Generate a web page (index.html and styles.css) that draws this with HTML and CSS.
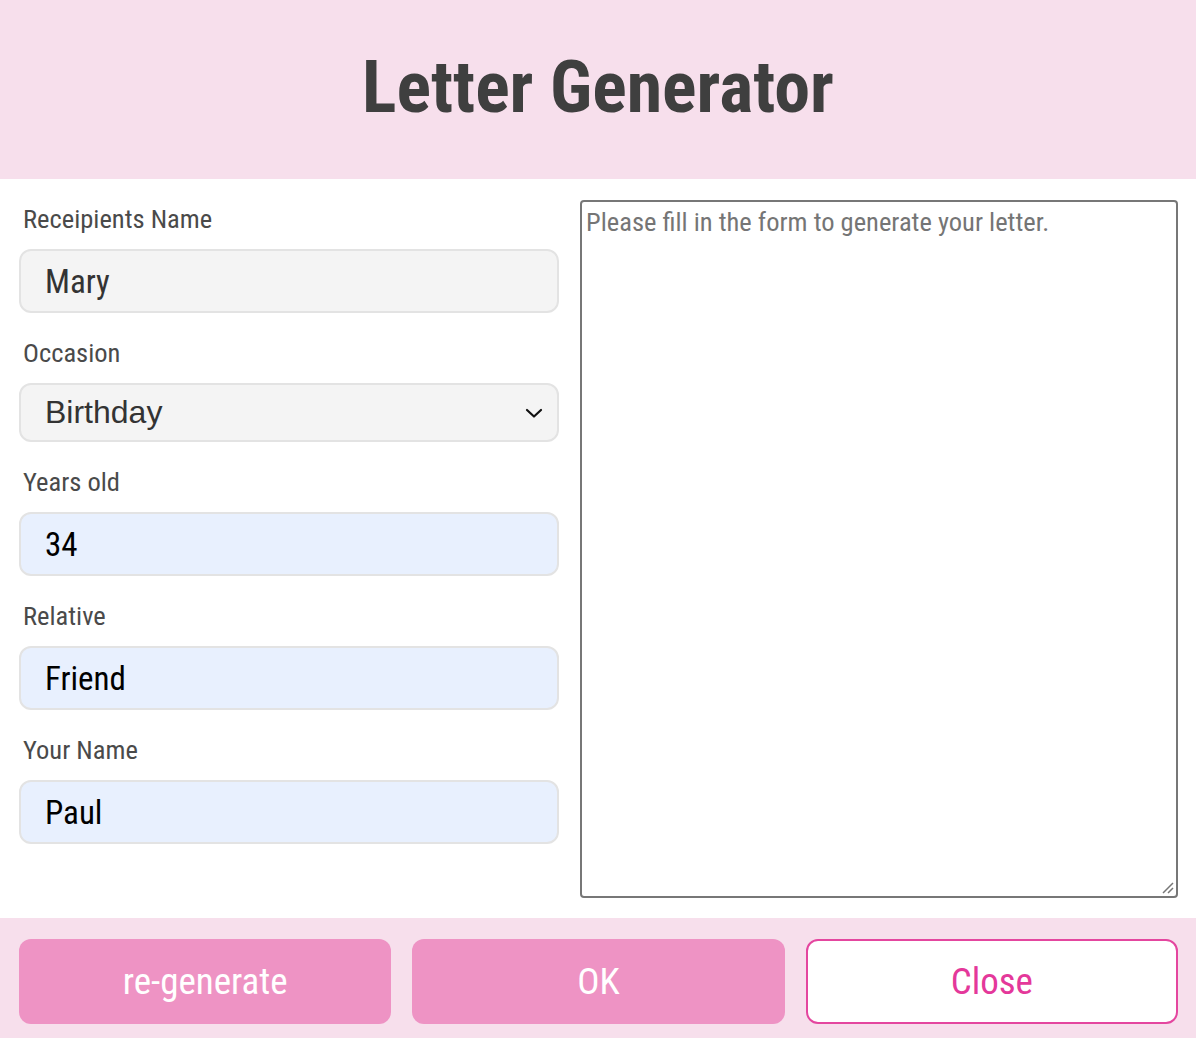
FILE: index.html
```html
<!DOCTYPE html>
<html lang="en">
<head>
<meta charset="utf-8">
<title>Letter Generator</title>
<link rel="stylesheet" href="styles.css">
</head>
<body>
<div class="app">
  <header class="header">
    <h1 class="title">Letter Generator</h1>
  </header>
  <main class="content">
    <form class="form">
      <div class="field">
        <label class="label">Receipients Name</label>
        <div class="input input-grey">Mary</div>
      </div>
      <div class="field">
        <label class="label">Occasion</label>
        <div class="input input-grey select">
          <span class="select-text">Birthday</span>
          <svg class="chevron" width="18" height="12" viewBox="0 0 18 12"><path d="M2 3 L9 9.5 L16 3" fill="none" stroke="#111" stroke-width="2.2" stroke-linecap="round" stroke-linejoin="round"/></svg>
        </div>
      </div>
      <div class="field">
        <label class="label">Years old</label>
        <div class="input input-blue">34</div>
      </div>
      <div class="field">
        <label class="label">Relative</label>
        <div class="input input-blue">Friend</div>
      </div>
      <div class="field">
        <label class="label">Your Name</label>
        <div class="input input-blue">Paul</div>
      </div>
    </form>
    <div class="letter">
      <div class="placeholder">Please fill in the form to generate your letter.</div>
      <svg class="grip" width="14" height="14" viewBox="0 0 14 14"><path d="M3 13 L13 3 M8 13 L13 8" stroke="#777" stroke-width="1.5" fill="none"/></svg>
    </div>
  </main>
  <footer class="footer">
    <button class="btn btn-fill">re-generate</button>
    <button class="btn btn-fill">OK</button>
    <button class="btn btn-outline">Close</button>
  </footer>
</div>
</body>
</html>
```
FILE: styles.css
```css
* { box-sizing: border-box; }
html, body { margin: 0; padding: 0; background: #fff; }
body {
  font-family: "Roboto Condensed", "Roboto", "Liberation Sans", sans-serif;
  font-stretch: condensed;
  width: 1196px;
  height: 1038px;
  overflow: hidden;
}
.app { display: flex; flex-direction: column; height: 1038px; }
.header {
  background: #f7dfec;
  height: 179px;
  display: flex;
  align-items: center;
  justify-content: center;
  padding-bottom: 4px;
}
.title {
  margin: 0;
  font-size: 72px;
  font-weight: 700;
  color: #3f3f3f;
}
.content {
  display: flex;
  padding: 21px 18px 20px 19px;
  gap: 21px;
  height: 739px;
}
.form {
  width: 540px;
  display: flex;
  flex-direction: column;
}
.field { display: flex; flex-direction: column; }
.label {
  font-size: 26.5px;
  color: #4a4a4a;
  padding-left: 4px;
  height: 30px;
  line-height: 30px;
  margin-top: 4px;
  margin-bottom: 15px;
}
.field + .field .label { margin-top: 25px; }
.input {
  height: 64px;
  border: 2px solid #e3e3e3;
  border-radius: 12px;
  padding: 0 24px;
  display: flex;
  align-items: center;
  font-size: 33px;
}
.input-grey { background: #f4f4f4; color: #333; }
.input-blue { background: #e8f0fe; color: #000; }
.select {
  height: 59px;
  justify-content: space-between;
  padding-right: 14px;
}
.select-text {
  font-family: "Liberation Sans", Arial, sans-serif;
  font-stretch: normal;
  font-size: 32px;
  color: #333;
}
.chevron { display: block; }
.letter {
  position: relative;
  flex: 1;
  border: 2px solid #777;
  border-radius: 4px;
  padding: 3px 4px;
}
.placeholder {
  font-size: 26.5px;
  color: #757575;
  line-height: 34px;
}
.grip { position: absolute; right: 2px; bottom: 2px; }
.footer {
  background: #f7dfec;
  flex: 1;
  display: grid;
  grid-template-columns: repeat(3, 1fr);
  gap: 21px;
  padding: 21px 18px 14px 19px;
}
.btn {
  height: 85px;
  border-radius: 12px;
  font-family: inherit;
  font-stretch: condensed;
  font-size: 37px;
  cursor: pointer;
  min-width: 0;
}
.btn-fill { background: #ee93c4; border: none; color: #fff; }
.btn-outline { background: #fff; border: 2px solid #e4469f; color: #e4389a; }
```
